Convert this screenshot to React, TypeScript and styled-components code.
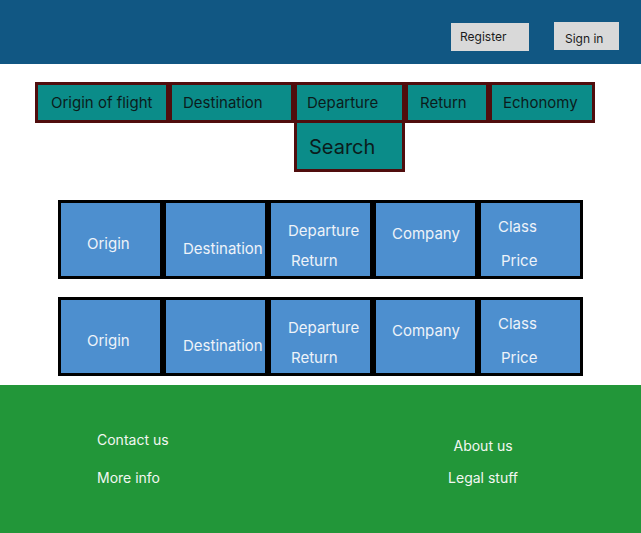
import React from "react";
import styled, { createGlobalStyle } from "styled-components";

const GlobalStyle = createGlobalStyle`
  html, body { margin: 0; padding: 0; background: #ffffff; }
  body { font-family: Inter, "Noto Sans", "Liberation Sans", sans-serif; }
  * { box-sizing: border-box; }
`;

const Page = styled.div`
  width: 641px;
  min-height: 533px;
  display: flex;
  flex-direction: column;
`;

const Header = styled.header`
  height: 64px;
  background: #115783;
  display: flex;
  justify-content: flex-end;
  align-items: flex-start;
  gap: 25px;
  padding: 22px 22px 0 0;
`;

const HeaderButton = styled.button<{ $w: number; $top: number; $pt: number; $pl: number }>`
  width: ${(p) => p.$w}px;
  height: 28px;
  margin-top: ${(p) => p.$top}px;
  padding: ${(p) => p.$pt}px 0 0 ${(p) => p.$pl}px;
  border: none;
  background: #d9d9d9;
  color: #1b1b1b;
  font-family: Inter, "Noto Sans", sans-serif;
  font-size: 12px;
  line-height: 14px;
  text-align: left;
  display: flex;
  align-items: flex-start;
`;

const Main = styled.main`
  display: flex;
  flex-direction: column;
  padding: 18px 0 9px 0;
`;

const SearchBar = styled.div`
  display: flex;
  align-items: flex-start;
  margin-left: 35px;
`;

const FieldColumn = styled.div`
  display: flex;
  flex-direction: column;
`;

const Field = styled.div<{ $w: number; $pl: number }>`
  width: ${(p) => p.$w}px;
  height: 41px;
  border: 3px solid #500d0d;
  background: #0b8c89;
  color: #0b1c1c;
  font-size: 15px;
  line-height: 18px;
  display: flex;
  align-items: center;
  padding-left: ${(p) => p.$pl}px;
  white-space: nowrap;
`;

const SearchButton = styled.div`
  width: 111px;
  height: 52px;
  margin-top: -3px;
  border: 3px solid #500d0d;
  background: #0b8c89;
  color: #0b1c1c;
  font-size: 20px;
  line-height: 24px;
  display: flex;
  align-items: center;
  padding: 2px 0 0 12px;
`;

const Results = styled.section`
  display: flex;
  flex-direction: column;
  gap: 18px;
  margin: 28px 0 0 58px;
`;

const ResultRow = styled.div`
  display: flex;
`;

const ResultCell = styled.div`
  width: 105px;
  height: 79px;
  border: 3px solid #000000;
  background: #4d8fcf;
  display: flex;
  flex-direction: column;
  align-items: flex-start;
`;

const CellText = styled.span<{ $x: number; $y: number }>`
  margin: ${(p) => p.$y}px 0 0 ${(p) => p.$x}px;
  color: #eef3f9;
  font-size: 15px;
  line-height: 18px;
  white-space: nowrap;
`;

const Footer = styled.footer`
  flex: 1;
  min-height: 148px;
  background: #229639;
  display: flex;
  justify-content: space-between;
  padding: 0 123px 0 97px;
`;

const FooterColumn = styled.div<{ $top: number; $gap: number; $align: string }>`
  display: flex;
  flex-direction: column;
  align-items: ${(p) => p.$align};
  gap: ${(p) => p.$gap}px;
  padding-top: ${(p) => p.$top}px;
`;

const FooterLink = styled.span`
  color: #f2f7f2;
  font-size: 14px;
  line-height: 18px;
  white-space: nowrap;
`;

type Line = { text: string; x: number; y: number };

const cells: Line[][] = [
  [{ text: "Origin", x: 26, y: 32 }],
  [{ text: "Destination", x: 17, y: 37 }],
  [
    { text: "Departure", x: 17, y: 19 },
    { text: "Return", x: 20, y: 12 },
  ],
  [{ text: "Company", x: 16, y: 22 }],
  [
    { text: "Class", x: 17, y: 15 },
    { text: "Price", x: 20, y: 16 },
  ],
];

const Row = () => (
  <ResultRow>
    {cells.map((lines, i) => (
      <ResultCell key={i}>
        {lines.map((l) => (
          <CellText key={l.text} $x={l.x} $y={l.y}>
            {l.text}
          </CellText>
        ))}
      </ResultCell>
    ))}
  </ResultRow>
);

export default function App() {
  return (
    <Page>
      <GlobalStyle />
      <Header>
        <HeaderButton $w={78} $top={1} $pt={7} $pl={9}>
          Register
        </HeaderButton>
        <HeaderButton $w={65} $top={0} $pt={10} $pl={11}>
          Sign in
        </HeaderButton>
      </Header>
      <Main>
        <SearchBar>
          <Field $w={134} $pl={13}>Origin of flight</Field>
          <Field $w={125} $pl={11}>Destination</Field>
          <FieldColumn>
            <Field $w={111} $pl={10}>Departure</Field>
            <SearchButton>Search</SearchButton>
          </FieldColumn>
          <Field $w={84} $pl={12}>Return</Field>
          <Field $w={106} $pl={11}>Echonomy</Field>
        </SearchBar>
        <Results>
          <Row />
          <Row />
        </Results>
      </Main>
      <Footer>
        <FooterColumn $top={46} $gap={20} $align="flex-start">
          <FooterLink>Contact us</FooterLink>
          <FooterLink>More info</FooterLink>
        </FooterColumn>
        <FooterColumn $top={52} $gap={14} $align="center">
          <FooterLink>About us</FooterLink>
          <FooterLink>Legal stuff</FooterLink>
        </FooterColumn>
      </Footer>
    </Page>
  );
}
